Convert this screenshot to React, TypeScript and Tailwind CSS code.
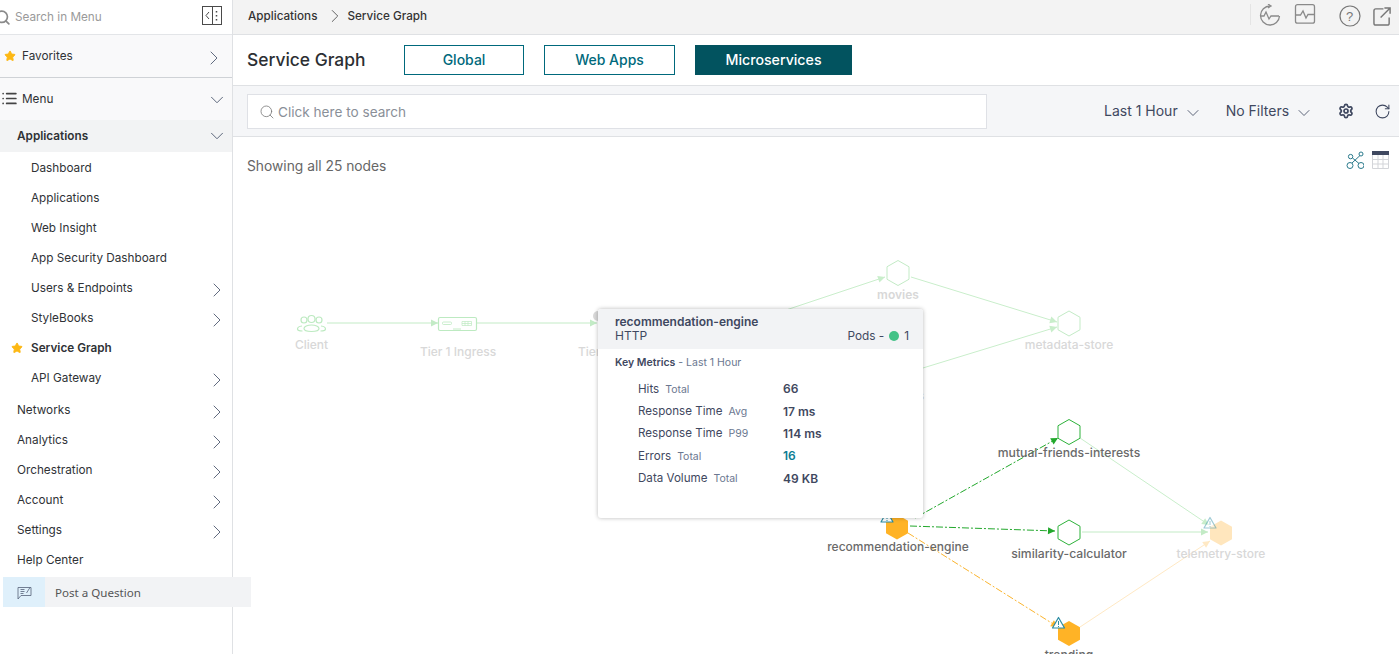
import { ChevronDown, ChevronRight, List, RotateCw, Search, Settings, Star } from "lucide-react";

const subItems = [
  { label: "Dashboard" },
  { label: "Applications" },
  { label: "Web Insight" },
  { label: "App Security Dashboard" },
  { label: "Users & Endpoints", more: true },
  { label: "StyleBooks", more: true },
  { label: "Service Graph", star: true },
  { label: "API Gateway", more: true },
];

const topItems = [
  { label: "Networks", more: true },
  { label: "Analytics", more: true },
  { label: "Orchestration", more: true },
  { label: "Account", more: true },
  { label: "Settings", more: true },
  { label: "Help Center" },
];

const metrics = [
  { name: "Hits", unit: "Total", value: "66" },
  { name: "Response Time", unit: "Avg", value: "17 ms" },
  { name: "Response Time", unit: "P99", value: "114 ms" },
  { name: "Errors", unit: "Total", value: "16", link: true },
  { name: "Data Volume", unit: "Total", value: "49 KB" },
];

function hexPoints(cx: number, cy: number, r: number) {
  const w = r * 0.88;
  return [
    [cx, cy - r],
    [cx + w, cy - r / 2],
    [cx + w, cy + r / 2],
    [cx, cy + r],
    [cx - w, cy + r / 2],
    [cx - w, cy - r / 2],
  ]
    .map((p) => p.join(","))
    .join(" ");
}

function Edge({ x1, y1, x2, y2, color, dash }: { x1: number; y1: number; x2: number; y2: number; color: string; dash?: boolean }) {
  const a = Math.atan2(y2 - y1, x2 - x1);
  const len = 7;
  const w = 3.5;
  const bx = x2 - len * Math.cos(a);
  const by = y2 - len * Math.sin(a);
  const pts = `${x2},${y2} ${bx - w * Math.sin(a)},${by + w * Math.cos(a)} ${bx + w * Math.sin(a)},${by - w * Math.cos(a)}`;
  return (
    <g>
      <line x1={x1} y1={y1} x2={x2} y2={y2} stroke={color} strokeWidth={1} strokeDasharray={dash ? "7 2 2 2" : undefined} />
      <polygon points={pts} fill={color} />
    </g>
  );
}

function Alert({ x, y, opacity = 1 }: { x: number; y: number; opacity?: number }) {
  return (
    <g opacity={opacity}>
      <polygon points={`${x},${y - 5.5} ${x + 6},${y + 5} ${x - 6},${y + 5}`} fill="#fff" stroke="#2b8ca3" strokeWidth={1.2} strokeLinejoin="round" />
      <line x1={x} y1={y - 2} x2={x} y2={y + 2} stroke="#2b8ca3" strokeWidth={1} />
      <line x1={x} y1={y + 3} x2={x} y2={y + 4} stroke="#2b8ca3" strokeWidth={1} />
    </g>
  );
}

function Graph() {
  const dark = "#6a6a6a";
  const faint = "#d8d8d8";
  return (
    <svg className="absolute inset-0 h-full w-full" viewBox="233 137 1166 517" style={{ fontFamily: "Inter, sans-serif" }}>
      <Edge x1={327} y1={323} x2={438} y2={323} color="#c3ebc6" />
      <Edge x1={477} y1={323} x2={597} y2={323} color="#c3ebc6" />
      <Edge x1={780} y1={312} x2={885} y2={277} color="#c9eecb" />
      <Edge x1={911} y1={277} x2={1057} y2={322} color="#c9eecb" />
      <Edge x1={900} y1={375} x2={1057} y2={327} color="#c9eecb" />
      <Edge x1={1080} y1={438} x2={1209} y2={525} color="#c9eecb" />
      <Edge x1={1082} y1={532} x2={1208} y2={532} color="#c3ebc6" />
      <Edge x1={1080} y1={627} x2={1210} y2={541} color="#ffe9c4" />
      <Edge x1={915} y1={518} x2={1058} y2={438} color="#22a82c" dash />
      <Edge x1={910} y1={526} x2={1055} y2={531} color="#22a82c" dash />
      <Edge x1={908} y1={533} x2={1058} y2={627} color="#fbb52f" dash />

      {/* client */}
      <g fill="none" stroke="#bdeac1" strokeWidth={1.2}>
        <circle cx={304} cy={320} r={3} />
        <circle cx={311.5} cy={319} r={3.5} />
        <circle cx={319} cy={320} r={3} />
        <path d="M302 326c-3 .3-4.500 1.500-4.500 3s2 2 5 2" />
        <path d="M321 326c3 .3 4.500 1.500 4.500 3s-2 2-5 2" />
        <path d="M304 328.500c0-2 3.500-3.500 7.500-3.500s7.500 1.500 7.500 3.500-3.500 3-7.500 3-7.500-1-7.500-3z" />
      </g>

      {/* tier 1 ingress */}
      <g fill="none" stroke="#bdeac1">
        <rect x={438.500} y={317.500} width={38} height={13} rx={1.500} strokeWidth={1.200} />
        <rect x={442.500} y={322} width={9} height={2.500} rx={1} strokeWidth={0.800} />
        <path d="M462 321.500h9.500v4H462zM465 321.500v4M468 321.500v4M462 323.500h9.500" strokeWidth={0.700} />
        <path d="M453 329h8M453 330.500h8" strokeWidth={0.900} />
      </g>
      <circle cx={598} cy={316} r={5} fill="#d9d9d9" />

      <polygon points={hexPoints(898, 273, 12.500)} fill="#fff" stroke="#c3ebc6" />
      <polygon points={hexPoints(1069, 323.500, 12.500)} fill="#fff" stroke="#c3ebc6" />
      <polygon points={hexPoints(1069, 432, 12.500)} fill="#fff" stroke="#2db23a" />
      <polygon points={hexPoints(1069, 532.500, 12.500)} fill="#fff" stroke="#2db23a" />
      <polygon points={hexPoints(1221, 533, 12.500)} fill="#ffe6bd" />
      <polygon points={hexPoints(897, 527, 12.500)} fill="#ffb326" />
      <polygon points={hexPoints(1069, 633.500, 12.500)} fill="#ffb326" />

      <Alert x={887} y={517} />
      <Alert x={1210} y={523} opacity={0.45} />
      <Alert x={1058.500} y={623} />

      <g fontSize={12} textAnchor="middle" fill={faint} fontWeight={500}>
        <text x={311.500} y={349}>Client</text>
        <text x={458} y={356}>Tier 1 Ingress</text>
        <text x={898} y={299} fontWeight={600}>movies</text>
        <text x={1069} y={349}>metadata-store</text>
        <text x={1221} y={558}>telemetry-store</text>
      </g>
      <text x={578} y={356} fontSize={12} fill={faint} fontWeight={500}>Tier 2 Ingress</text>
      <text x={924} y={400} fontSize={12} textAnchor="end" fill={faint} fontWeight={600}>reviews</text>
      <g fontSize={12.200} textAnchor="middle" fill={dark} fontWeight={500}>
        <text x={1069} y={457}>mutual-friends-interests</text>
        <text x={898} y={551} fontSize={12}>recommendation-engine</text>
        <text x={1069} y={558}>similarity-calculator</text>
        <text x={1069} y={659}>trending</text>
      </g>
    </svg>
  );
}

function Tooltip() {
  return (
    <div className="absolute left-[365px] top-[172px] h-[209px] w-[325px] overflow-hidden rounded-[3px] bg-white shadow-[0_0_4px_rgba(0,0,0,0.28)]">
      <div className="relative h-[40px] bg-[#f2f3f5] pl-[17px] pt-[6px] text-[#3f4860]">
        <div className="text-[12px] leading-[14px] font-semibold">recommendation-engine</div>
        <div className="text-[12px] leading-[14px]">HTTP</div>
        <div className="absolute right-[14px] top-[20px] flex items-center text-[11.800px] leading-[14px]">
          Pods -<span className="ml-[5px] mr-[5px] h-[10px] w-[10px] rounded-full bg-[#43c287]" />1
        </div>
      </div>
      <div className="pl-[17px] pt-[7px] text-[10.500px] leading-[13px] text-[#6b7790]">
        <span className="font-semibold text-[#3f4860]">Key Metrics</span> - Last 1 Hour
      </div>
      <div className="pl-[40px] pt-[9px]">
        {metrics.map((m) => (
          <div key={m.name + m.unit} className="flex h-[22.400px] items-center">
            <div className="w-[145px] text-[11.600px] text-[#3f4860]">
              {m.name}
              <span className="ml-[6px] text-[10.500px] text-[#6b7790]">{m.unit}</span>
            </div>
            <div className={`text-[12px] font-semibold ${m.link ? "text-[#0d7c93]" : "text-[#3f4860]"}`}>{m.value}</div>
          </div>
        ))}
      </div>
    </div>
  );
}

function Sidebar() {
  return (
    <aside className="relative w-[233px] shrink-0 border-r border-[#dfe1e4] bg-white text-[11.750px] text-[#2f3236]">
      <div className="relative flex h-[35px] items-center border-b border-[#e3e5e8] pl-[15px] pt-[2px]">
        <Search className="absolute left-[-6px] top-[9px] h-[17px] w-[17px] text-[#8a8a8a]" strokeWidth={2.400} />
        <span className="text-[#9a9a9a]">Search in Menu</span>
        <svg className="absolute left-[202px] top-[6px] h-[19px] w-[20px]" viewBox="0 0 20 19" fill="none" stroke="#4a4a4a">
          <rect x="0.500" y="0.500" width="19" height="18" />
          <path d="M10.500 0.500v18M7 6l-3 3.500 3 3.500" />
          <path d="M14.500 5v1.500M14.500 9v1.500M14.500 13v1.500" strokeWidth="1.500" />
        </svg>
      </div>
      <div className="relative flex h-[43px] items-center border-b border-[#cfd2d6] bg-[#f9f9fa] pl-[22px] pt-[2px]">
        <Star className="absolute left-[4px] top-[15px] h-[12px] w-[12px] fill-[#fdb813] text-[#fdb813]" />
        Favorites
        <ChevronRight className="absolute left-[202px] top-[11px] h-[24px] w-[24px] text-[#4f5a70]" strokeWidth={0.900} />
      </div>
      <div className="relative flex h-[42px] items-center bg-[#f9f9fa] pl-[22px] pt-[2px]">
        <List className="absolute left-[1px] top-[12px] h-[17px] w-[17px] text-[#444]" strokeWidth={2.400} />
        Menu
        <ChevronDown className="absolute left-[206px] top-[11px] h-[22px] w-[22px] text-[#4f5a70]" strokeWidth={1} />
      </div>
      <div className="relative flex h-[32px] items-center bg-[#f2f3f4] pl-[17px] pt-[2px] font-semibold">
        Applications
        <ChevronDown className="absolute left-[206px] top-[5px] h-[22px] w-[22px] text-[#4f5a70]" strokeWidth={1} />
      </div>
      <div className="mb-[2px] mt-px">
        {subItems.map((item) => (
          <div key={item.label} className={`relative flex h-[30px] items-center pl-[31px] pt-[2px] ${item.star ? "font-semibold" : ""}`}>
            {item.star && <Star className="absolute left-[11px] top-[9px] h-[12px] w-[12px] fill-[#fdb813] text-[#fdb813]" />}
            {item.label}
            {item.more && <ChevronRight className="absolute left-[205px] top-[5px] h-[24px] w-[24px] text-[#4f5a70]" strokeWidth={0.900} />}
          </div>
        ))}
      </div>
      {topItems.map((item) => (
        <div key={item.label} className="relative flex h-[30px] items-center pl-[17px] pt-[2px]">
          {item.label}
          {item.more && <ChevronRight className="absolute left-[205px] top-[5px] h-[24px] w-[24px] text-[#4f5a70]" strokeWidth={0.900} />}
        </div>
      ))}
      <div className="absolute left-[3px] top-[577px] z-10 flex h-[30px] w-[248px] items-center bg-[#f2f3f5]">
        <div className="flex h-full w-[42px] items-center justify-center bg-[#dff0fb] pt-px">
          <svg className="h-[14px] w-[15px]" viewBox="0 0 15 14" fill="none" stroke="#56627a" strokeWidth="0.800">
            <path d="M1 1.500h13v8H4L1 13z" />
            <path d="M3.500 3.500h4M3.500 5.500h4M3.500 7.500h3M9.500 7l3.500-5.500" />
          </svg>
        </div>
        <span className="ml-[10px] pt-[2px] font-['Noto_Sans',sans-serif] text-[11.600px] text-[#555]">Post a Question</span>
      </div>
    </aside>
  );
}

function Header() {
  return (
    <div className="relative flex h-[35px] items-center gap-[30px] border-b border-[#dfe1e4] bg-[#f3f3f3] pl-[15px] text-[11.700px] font-medium text-[#333]">
      <span>Applications</span>
      <span>Service Graph</span>
      <ChevronRight className="absolute left-[91px] top-[5px] h-[22px] w-[22px] text-[#555]" strokeWidth={1} />
      <svg className="absolute left-[1017px] top-[4px] h-[22px] w-[70px]" viewBox="0 0 70 22" fill="none" stroke="#8a8a8a" strokeWidth="1.300">
        <path d="M0 0v21" stroke="#dcdcdc" />
        <path d="M20 2a9.500 9.500 0 1 0 9.500 10" />
        <path d="M18 0l3 2-3 2" />
        <path d="M10 12h4l2-4 3 7 2-3h8" />
        <rect x="45.500" y="0.700" width="19" height="18.500" rx="2" />
        <path d="M45.500 11h5l2.500-4 3 7 2-3.500h6.500" />
      </svg>
      <svg className="absolute left-[1106px] top-[5px] h-[22px] w-[22px]" viewBox="0 0 22 22" fill="none" stroke="#777" strokeWidth="1.200">
        <circle cx="11" cy="11" r="10" />
      </svg>
      <span className="absolute left-[1113px] top-[9px] font-['Liberation_Sans',sans-serif] text-[13px] font-normal leading-[15px] text-[#777]">?</span>
      <svg className="absolute left-[1140px] top-[7px] h-[19px] w-[19px]" viewBox="0 0 20 20" fill="none" stroke="#777" strokeWidth="1.500">
        <path d="M11 2H3a2 2 0 0 0-2 2v13a2 2 0 0 0 2 2h12a2 2 0 0 0 2-2v-6" />
        <path d="M8 11 18 1M12 1h6v6" />
      </svg>
    </div>
  );
}

function TitleRow() {
  return (
    <div className="flex h-[51px] items-center border-b border-[#dfe1e4] pb-px pl-[14px]">
      <h1 className="w-[157px] pt-[2px] text-[17.400px] font-medium text-[#2c2f33]">Service Graph</h1>
      <button className="h-[30px] w-[120px] border border-[#00697c] text-[14px] font-medium text-[#00697c]">Global</button>
      <button className="ml-[20px] h-[30px] w-[131px] border border-[#00697c] text-[14px] font-medium text-[#00697c]">Web Apps</button>
      <button className="ml-[20px] h-[30px] w-[157px] bg-[#02535f] text-[14.200px] font-medium text-white">Microservices</button>
    </div>
  );
}

function FilterRow() {
  return (
    <div className="relative flex h-[51px] items-center border-b border-[#dfe1e4] bg-[#f5f6f8] pl-[14px] text-[14px] text-[#3f4860]">
      <div className="flex h-[35px] w-[740px] items-center border border-[#dfe1e6] bg-white pl-[11px] pt-[2px] text-[13.600px] text-[#8a8f98]">
        <Search className="mr-[3px] h-[16px] w-[16px] text-[#777]" strokeWidth={1.200} />
        Click here to search
      </div>
      <span className="ml-[117px] pb-[2px]">Last 1 Hour</span>
      <ChevronDown className="ml-[5px] mt-[3px] h-[20px] w-[20px]" strokeWidth={1} />
      <span className="ml-[23px] pb-[2px]">No Filters</span>
      <ChevronDown className="ml-[5px] mt-[3px] h-[20px] w-[20px]" strokeWidth={1} />
      <Settings className="ml-[24px] h-[16px] w-[16px]" strokeWidth={2.600} />
      <RotateCw className="ml-[20px] h-[17px] w-[17px]" strokeWidth={1.500} />
    </div>
  );
}

export default function App() {
  return (
    <div className="flex h-[654px] w-[1399px] overflow-hidden bg-white font-['Inter',sans-serif]">
      <Sidebar />
      <main className="flex min-w-0 flex-1 flex-col">
        <Header />
        <TitleRow />
        <FilterRow />
        <div className="relative flex-1 overflow-hidden">
          <Graph />
          <div className="absolute left-[14px] top-[19px] text-[13.800px] text-[#666]">Showing all 25 nodes</div>
          <svg className="absolute left-[1113px] top-[14px] h-[19px] w-[18px]" viewBox="0 0 18 19" fill="none" stroke="#2a7a8c" strokeWidth="1">
            <circle cx="4.600" cy="5.600" r="2.200" />
            <circle cx="15" cy="3" r="2" />
            <circle cx="4" cy="14.500" r="3" />
            <circle cx="15" cy="14.500" r="3" />
            <path d="M6 12 14 4.500M6.500 7l6.500 5.500" />
          </svg>
          <svg className="absolute left-[1139px] top-[14px] h-[18px] w-[17px]" viewBox="0 0 17 18" fill="none">
            <rect width="17" height="4" fill="#3f4860" />
            <path d="M.5 4v13.500h16V4M0 8.500h17M0 13h17M6 4v14M11 4v14" stroke="#d3d5d9" />
          </svg>
          <Tooltip />
        </div>
      </main>
    </div>
  );
}
